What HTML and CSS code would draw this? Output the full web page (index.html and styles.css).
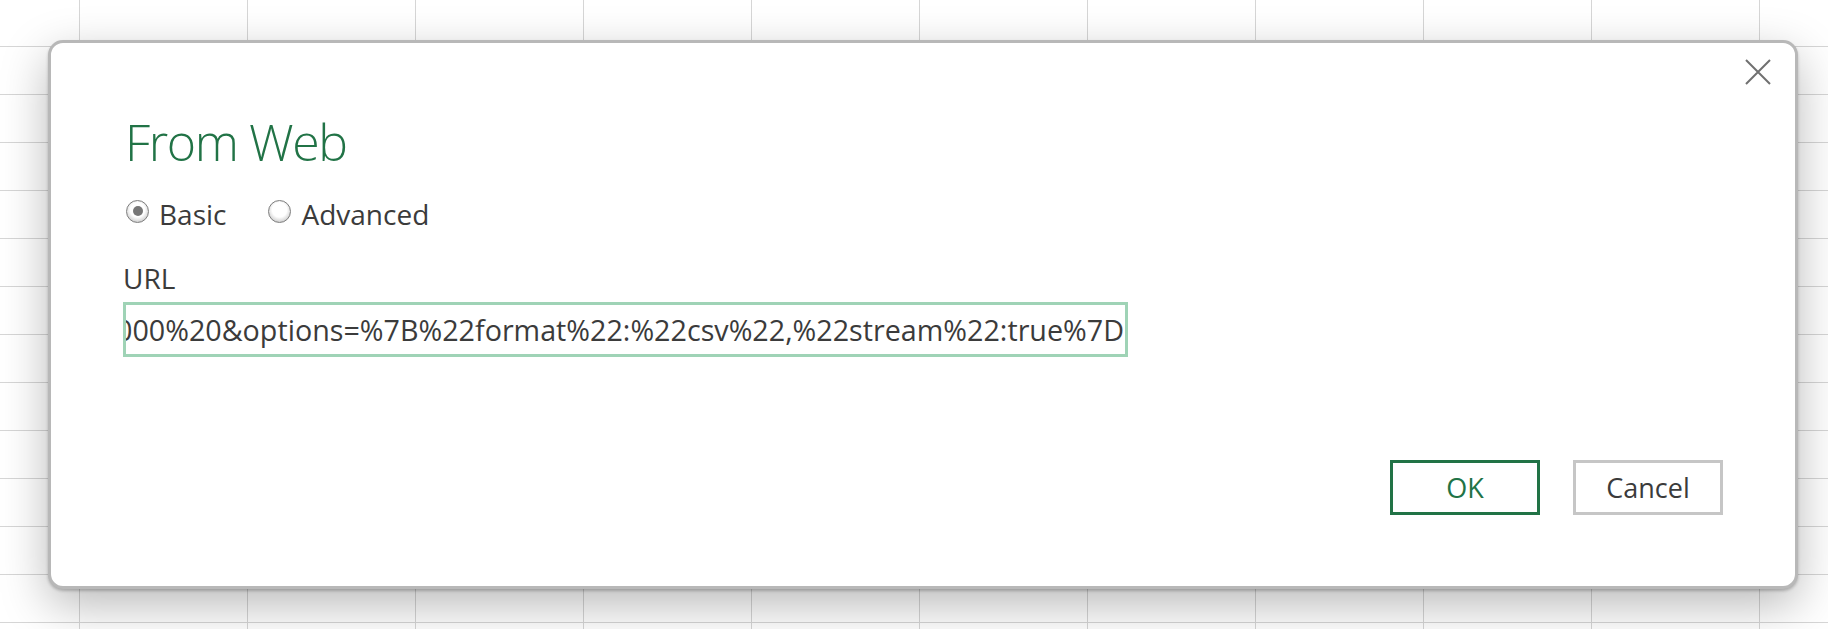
FILE: index.html
```html
<html>
  <head>
    <title>From Web</title>
    <meta charset="utf-8" />
    <link rel="stylesheet" href="styles.css">
  </head>
  <body>
    <div class="sheet">
      <div class="dialog">
        <button class="close" type="button" title="Close">
          <svg width="26" height="26" viewBox="0 0 26 26">
            <path d="M1 1 L25 25 M25 1 L1 25" stroke="#707070" stroke-width="2" fill="none" />
          </svg>
        </button>
        <h1 class="title">From Web</h1>
        <div class="modes">
          <label class="option"><span class="radio checked"></span>Basic</label>
          <label class="option"><span class="radio"></span>Advanced</label>
        </div>
        <div class="label">URL</div>
        <div class="url-box"><span class="url-text">0000%20&amp;options=%7B%22format%22:%22csv%22,%22stream%22:true%7D</span></div>
        <div class="actions">
          <button class="btn primary" type="button">OK</button>
          <button class="btn" type="button">Cancel</button>
        </div>
      </div>
    </div>
  </body>
</html>
```
FILE: styles.css
```css
* {
  padding: 0;
  margin: 0;
  box-sizing: border-box;
}
body  {
  font-family: "Open Sans", "Noto Sans", sans-serif;
  color: #3b3b3b;
  background: #fff;
}
.sheet  {
  width: 1828px;
  height: 629px;
  overflow: hidden;
  padding: 40px 0 0 48px;
  background-color: #fff;
  background-image:
    linear-gradient(to right, #d6d6d6 1px, transparent 1px),
    linear-gradient(to bottom, #d6d6d6 1px, transparent 1px);
  background-size: 168px 48px;
  background-position: 79px 46px;
}
.dialog  {
  position: relative;
  width: 1750px;
  height: 549px;
  background: #fff;
  border: 3px solid #b8b8b8;
  border-radius: 15px;
  box-shadow: 0 2px 3px rgba(0,0,0,0.22), 0 16px 48px rgba(0,0,0,0.28);
  padding: 72px 72px 0 72px;
}
.close  {
  position: absolute;
  top: 16px;
  right: 24px;
  width: 26px;
  height: 26px;
  border: none;
  background: none;
  display: block;
}
.close svg  {
  display: block;
}
.title  {
  font-size: 50px;
  line-height: 60px;
  font-weight: 300;
  letter-spacing: -1.4px;
  color: #217346;
  margin-top: -3px;
  margin-left: 2px;
}
.modes  {
  display: flex;
  margin-top: 24px;
  font-size: 28px;
  line-height: 36px;
}
.option  {
  display: flex;
  align-items: center;
  margin-right: 39px;
}
.radio  {
  width: 23px;
  height: 23px;
  border-radius: 50%;
  margin: 0 10px 6px 3px;
  border: 1.5px solid #7e7e7e;
  background: radial-gradient(circle at 50% 42%, #fff 45%, #dcdcdc 68%, #a9a9a9 100%);
  display: flex;
  align-items: center;
  justify-content: center;
}
.radio.checked::after  {
  content: "";
  width: 10px;
  height: 10px;
  border-radius: 50%;
  background: #777;
}
.label  {
  margin-top: 28px;
  font-size: 28px;
  line-height: 36px;
}
.url-box  {
  margin-top: 6px;
  width: 1005px;
  height: 55px;
  border: 3px solid #9fd3b6;
  display: flex;
  justify-content: flex-end;
  overflow: hidden;
  white-space: nowrap;
  font-size: 28.7px;
  line-height: 49px;
  padding-right: 1px;
}
.actions  {
  display: flex;
  justify-content: flex-end;
  gap: 33px;
  margin-top: 103px;
}
.btn  {
  width: 150px;
  height: 55px;
  border: 3px solid #c6c6c6;
  background: #fff;
  font-family: "Open Sans", "Noto Sans", sans-serif;
  font-size: 27px;
  line-height: 49px;
  color: #3b3b3b;
}
.btn.primary  {
  border-color: #217346;
  color: #217346;
}
```
